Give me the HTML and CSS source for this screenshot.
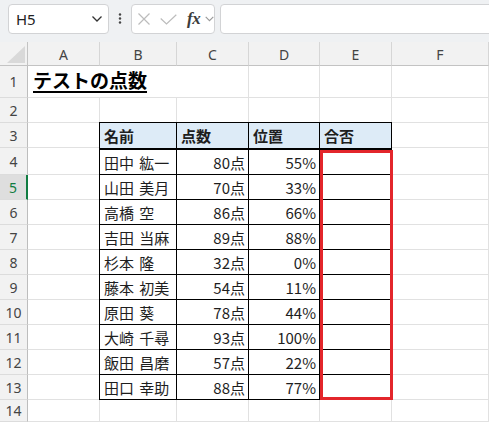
FILE: index.html
```html
<!DOCTYPE html>
<html lang="ja">
<head>
<meta charset="utf-8">
<title>テストの点数</title>
<link rel="stylesheet" href="styles.css">
</head>
<body>
<div class="toolbar">
  <div class="namebox">
    <span class="nb-text">H5</span>
    <svg class="nb-chev" width="12" height="8" viewBox="0 0 12 8"><path d="M1.5 1.5 L6 6 L10.5 1.5" fill="none" stroke="#333" stroke-width="1.3"/></svg>
  </div>
  <div class="dots">
    <svg width="4" height="12" viewBox="0 0 4 12"><circle cx="2" cy="1.5" r="1.2" fill="#444"/><circle cx="2" cy="5.5" r="1.2" fill="#444"/><circle cx="2" cy="9.5" r="1.2" fill="#444"/></svg>
  </div>
  <div class="btnbox">
    <svg class="ic-x" width="12" height="12" viewBox="0 0 12 12"><path d="M0.5 0.5 L11.5 11.5 M11.5 0.5 L0.5 11.5" stroke="#bcbcbc" stroke-width="1.2" fill="none"/></svg>
    <svg class="ic-ok" width="17" height="11" viewBox="0 0 17 11"><path d="M0.7 4.5 L6.5 10 L16.3 0.7" stroke="#bcbcbc" stroke-width="1.2" fill="none"/></svg>
    <span class="fx">fx</span>
    <svg class="ic-chev" width="9" height="6" viewBox="0 0 9 6"><path d="M0.7 0.8 L4.5 4.6 L8.3 0.8" stroke="#999" stroke-width="1.1" fill="none"/></svg>
  </div>
  <div class="fbar"></div>
</div>

<div class="sheet">
  <div class="corner"><svg width="18" height="17" viewBox="0 0 18 17"><path d="M18 0 L18 17 L0 17 Z" fill="#d9d9d9"/></svg></div>
  <div class="ch">A</div><div class="ch">B</div><div class="ch">C</div><div class="ch">D</div><div class="ch">E</div><div class="ch">F</div>

  <div class="rh">1</div><div class="c title"><span>テストの点数</span></div><div class="c"></div><div class="c"></div><div class="c"></div>
  <div class="rh">2</div><div class="c"></div><div class="c"></div><div class="c"></div><div class="c"></div><div class="c"></div><div class="c"></div>

  <div class="tbl">
    <div class="tc th">名前</div><div class="tc th">点数</div><div class="tc th">位置</div><div class="tc th">合否</div>
    <div class="tc">田中 紘一</div><div class="tc num">80点</div><div class="tc num">55%</div><div class="tc"></div>
    <div class="tc">山田 美月</div><div class="tc num">70点</div><div class="tc num">33%</div><div class="tc"></div>
    <div class="tc">高橋 空</div><div class="tc num">86点</div><div class="tc num">66%</div><div class="tc"></div>
    <div class="tc">吉田 当麻</div><div class="tc num">89点</div><div class="tc num">88%</div><div class="tc"></div>
    <div class="tc">杉本 隆</div><div class="tc num">32点</div><div class="tc num">0%</div><div class="tc"></div>
    <div class="tc">藤本 初美</div><div class="tc num">54点</div><div class="tc num">11%</div><div class="tc"></div>
    <div class="tc">原田 葵</div><div class="tc num">78点</div><div class="tc num">44%</div><div class="tc"></div>
    <div class="tc">大崎 千尋</div><div class="tc num">93点</div><div class="tc num">100%</div><div class="tc"></div>
    <div class="tc">飯田 昌磨</div><div class="tc num">57点</div><div class="tc num">22%</div><div class="tc"></div>
    <div class="tc">田口 幸助</div><div class="tc num">88点</div><div class="tc num">77%</div><div class="tc"></div>
    <div class="redbox"></div>
  </div>

  <div class="rh">3</div><div class="c"></div><div class="c"></div>
  <div class="rh">4</div><div class="c"></div><div class="c"></div>
  <div class="rh sel">5</div><div class="c"></div><div class="c"></div>
  <div class="rh">6</div><div class="c"></div><div class="c"></div>
  <div class="rh">7</div><div class="c"></div><div class="c"></div>
  <div class="rh">8</div><div class="c"></div><div class="c"></div>
  <div class="rh">9</div><div class="c"></div><div class="c"></div>
  <div class="rh">10</div><div class="c"></div><div class="c"></div>
  <div class="rh">11</div><div class="c"></div><div class="c"></div>
  <div class="rh">12</div><div class="c"></div><div class="c"></div>
  <div class="rh">13</div><div class="c"></div><div class="c"></div>
  <div class="rh">14</div><div class="c"></div><div class="c"></div><div class="c"></div><div class="c"></div><div class="c"></div><div class="c"></div>
</div>
</body>
</html>
```
FILE: styles.css
```css
* { box-sizing: border-box; }

body {
  margin: 0;
  width: 489px;
  height: 422px;
  overflow: hidden;
  background: #fff;
  font-family: "Noto Sans CJK JP", "Noto Sans", sans-serif;
}

/* ---------- toolbar ---------- */
.toolbar {
  display: flex;
  align-items: flex-start;
  height: 42px;
  padding: 4px 0 0 8px;
  background: #eff1f3;
  overflow: hidden;
}

.namebox {
  width: 101px;
  height: 30px;
  flex: none;
  display: flex;
  align-items: center;
  justify-content: space-between;
  padding: 0 5px 0 7px;
  background: #fff;
  border: 1px solid #d2d3d5;
  border-radius: 4px;
}

.nb-text {
  font-family: "Noto Sans", sans-serif;
  font-size: 15px;
  color: #222;
  line-height: 1;
}

.dots {
  width: 22px;
  height: 30px;
  flex: none;
  display: flex;
  align-items: center;
  justify-content: center;
  padding-right: 1px;
}
.dots svg { display: block; }

.btnbox {
  width: 84px;
  height: 30px;
  flex: none;
  display: flex;
  align-items: center;
  padding-left: 6px;
  background: #fff;
  border: 1px solid #d2d3d5;
  border-radius: 4px;
}
.btnbox svg { display: block; flex: none; }
.ic-ok { margin-left: 10px; }
.fx {
  margin-left: 10px;
  font-family: "Liberation Serif", serif;
  font-style: italic;
  font-weight: bold;
  font-size: 17px;
  color: #3c3c3c;
  line-height: 1;
  letter-spacing: -0.5px;
  padding-bottom: 2px;
}
.ic-chev { margin-left: 5px; }

.fbar {
  flex: 1;
  height: 30px;
  margin-left: 5px;
  margin-right: -10px;
  background: #fff;
  border: 1px solid #d2d3d5;
  border-radius: 4px 0 0 4px;
}

/* ---------- sheet ---------- */
.sheet {
  display: grid;
  grid-template-columns: 28px 72px 77px 72px 71px 72px 1fr;
  grid-template-rows: 24px 32px 25px 25px 27px repeat(9, 25px) 22px;
}

.corner {
  background: #f2f2f2;
  border-right: 1px solid #c3c3c3;
  border-bottom: 1px solid #c3c3c3;
  display: flex;
  align-items: flex-end;
  justify-content: flex-end;
  padding: 0 2px 2px 0;
}
.corner svg { display: block; }

.ch {
  background: #f2f2f2;
  border-right: 1px solid #d6d6d6;
  border-bottom: 1px solid #c3c3c3;
  display: flex;
  align-items: center;
  justify-content: center;
  font-family: "Noto Sans", sans-serif;
  font-size: 14px;
  color: #444;
  padding-top: 1px;
}

.rh {
  background: #f2f2f2;
  border-right: 1px solid #bdbdbd;
  border-bottom: 1px solid #dcdcdc;
  display: flex;
  align-items: center;
  justify-content: center;
  font-family: "Noto Sans", sans-serif;
  font-size: 14px;
  color: #444;
}
.rh.sel {
  background: #dedede;
  color: #107c41;
  border-right: 2px solid #107c41;
}

.c {
  border-right: 1px solid #e1e1e1;
  border-bottom: 1px solid #e1e1e1;
}

.title {
  grid-column: span 3;
  display: flex;
  align-items: flex-end;
  padding: 0 0 5px 5px;
}
.title span {
  font-size: 19px;
  font-weight: bold;
  color: #000;
  line-height: 24px;
  text-decoration: underline;
  text-decoration-thickness: 2px;
  text-underline-offset: 3px;
}

/* ---------- data table ---------- */
.tbl {
  position: relative;
  grid-column: 3 / 7;
  grid-row: 4 / 15;
  margin: -1px 0 0 -1px;
  display: grid;
  grid-template-columns: 77px 72px 71px 72px;
  grid-template-rows: 27px repeat(10, 25px);
  border-left: 1px solid #000;
  border-top: 1px solid #000;
  background: #fff;
}

.tc {
  display: flex;
  align-items: center;
  padding: 0 3px 0 4px;
  border-right: 1px solid #000;
  border-bottom: 1px solid #000;
  font-size: 15px;
  color: #1e1e1e;
  line-height: 1;
  white-space: nowrap;
  word-spacing: 2px;
}
.th {
  background: #ddebf7;
  font-weight: bold;
  border-bottom-width: 2px;
}
.num { justify-content: flex-end; }

/* highlight border drawn over the E4:E13 cells */
.redbox {
  position: absolute;
  grid-column: 4;
  grid-row: 2 / 12;
  top: 0;
  left: 0;
  right: -1px;
  bottom: 0;
  border: 3px solid #e3262b;
  pointer-events: none;
}
```
